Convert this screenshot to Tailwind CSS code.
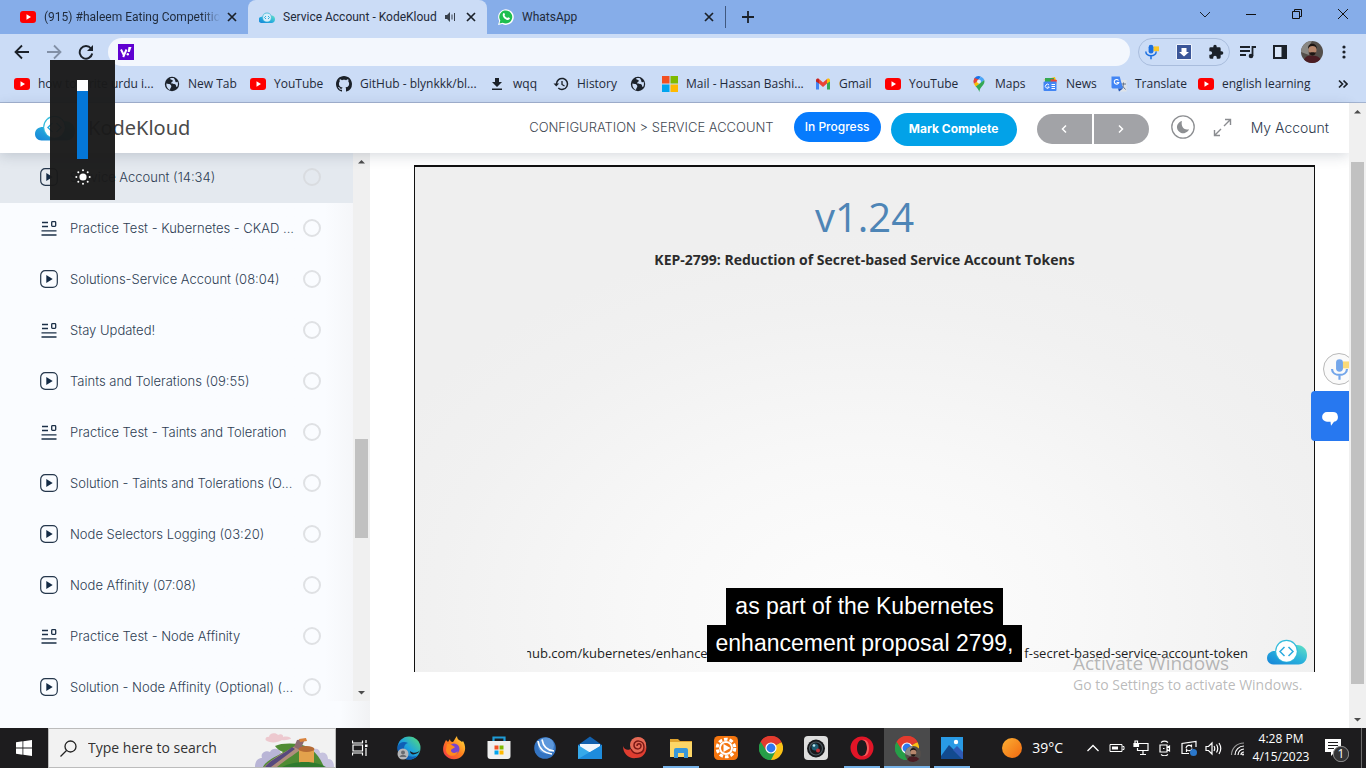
<!DOCTYPE html>
<html lang="en">
<head>
<meta charset="utf-8">
<title>Service Account - KodeKloud</title>
<script src="https://cdn.jsdelivr.net/npm/@tailwindcss/browser@4"></script>
</head>
<body class="flex h-screen flex-col overflow-hidden bg-white font-['Open_Sans','Noto_Sans',sans-serif] text-xs text-[#1f2a3a]">

<svg width="0" height="0" class="absolute" aria-hidden="true">
  <defs>
    <linearGradient id="cloudFill" x1="0" y1="1" x2="1" y2="0"><stop offset="0" stop-color="#1583d8"/><stop offset=".5" stop-color="#29b0dc"/><stop offset="1" stop-color="#62e3c4"/></linearGradient>
    <linearGradient id="sunFill" x1="0" y1="0" x2="1" y2="1"><stop offset="0" stop-color="#fbb034"/><stop offset="1" stop-color="#f2680f"/></linearGradient>
    <linearGradient id="edgeFill" x1="0" y1="1" x2="1" y2="0"><stop offset="0" stop-color="#0d5cb6"/><stop offset=".5" stop-color="#1fa4dd"/><stop offset="1" stop-color="#5ae06f"/></linearGradient>
    <linearGradient id="foxFill" x1="0" y1="1" x2="1" y2="0"><stop offset="0" stop-color="#f0304f"/><stop offset=".5" stop-color="#ff7b1c"/><stop offset="1" stop-color="#ffe83f"/></linearGradient>
    <symbol id="yt" viewBox="0 0 16 16"><rect y="2" width="16" height="12" rx="3" fill="#f00"/><path d="M6.500 5.300v5.400L11 8z" fill="#fff"/></symbol>
    <symbol id="cloud" viewBox="0 0 40 26"><path d="M6.500 25.500C2.500 25.500 0 22.500 0 19c0-4.500 3.500-7 8-7L29 6c6.500-.5 11 4 11 10 0 5.500-3.500 9.500-8.500 9.500z" fill="url(#cloudFill)"/><circle cx="19.500" cy="12" r="11.300" fill="#34bcdc"/><circle cx="19.500" cy="12.400" r="10.300" fill="#fff"/><path d="M17.500 8L13 12.500l4.500 4.500M21.500 8l4.500 4.500-4.500 4.500" fill="none" stroke="#2cabdf" stroke-width="1.500"/></symbol>
    <symbol id="cloudTab" viewBox="0 0 16 11"><path d="M3 11a3 3 0 0 1-.5-6.200L13 3.500c4 .5 4 7 0 7.500z" fill="url(#cloudFill)"/><circle cx="8" cy="5.300" r="4.800" fill="#5cc0dd"/><circle cx="8" cy="5.500" r="3.900" fill="#d8eefa"/><path d="M7 4L5.500 5.500 7 7M9 4l1.500 1.500L9 7" fill="none" stroke="#2cabdf"/></symbol>
    <symbol id="x" viewBox="0 0 16 16"><path d="M4 4l8 8M12 4l-8 8" stroke="#1b2129" stroke-width="1.700"/></symbol>
    <symbol id="globe" viewBox="0 0 16 16"><circle cx="8" cy="8" r="7.200" fill="#1c222b"/><path d="M2.300 7.500c2 .5 4.500.3 5 2.500.3 1.500-1.300 1.800-1.300 4-2-.8-3.900-3-3.700-6.500zM6 2.400c.5 1.700 2.500.9 2.800 2.300.2 1.200-1.700 1-1.500 2.300.3 1.500 3 .2 4.400 1.800.6.8.3 2.400 1.300 2.200 1-1 1.300-3.500.6-5.200-1.300 1-2.300.3-2.300-.8 0-1.200-1-1.600-1.300-2.700C8.600 1.900 7.300 1.900 6 2.400z" fill="#cbdcf6"/></symbol>
    <symbol id="play" viewBox="0 0 18 18"><rect x=".7" y=".7" width="16.600" height="16.600" rx="4.500" fill="none" stroke="#24364b" stroke-width="1.200"/><path d="M6.300 5v8l6.400-4z" fill="#132a44"/></symbol>
    <symbol id="test" viewBox="0 0 18 18"><path d="M2 3.500h6M2 7.500h6M1.500 11.800h15M1.500 16h15" stroke="#1b2f47" stroke-width="1.300" fill="none"/><rect x="11.700" y="2.700" width="4" height="4.600" rx=".8" fill="none" stroke="#1b2f47" stroke-width="1.300"/></symbol>
    <symbol id="chrome" viewBox="0 0 24 24"><path d="M12 12L1.600 6A12 12 0 0 1 22.400 6z" fill="#e33b2e"/><path d="M12 12L22.400 6A12 12 0 0 1 12 24z" fill="#fbc116"/><path d="M12 12v12A12 12 0 0 1 1.600 6z" fill="#269e48"/><path d="M12 6.500h10.700A12 12 0 0 0 1.600 6l5.600 9z" fill="#e33b2e"/><path d="M16.800 14.800L12 24A12 12 0 0 1 1.600 6l5.600 8.800z" fill="#269e48"/><circle cx="12" cy="12" r="5.600" fill="#fff"/><circle cx="12" cy="12" r="4.400" fill="#2f78ee"/></symbol>
    <symbol id="face" viewBox="0 0 22 22"><circle cx="11" cy="11" r="11" fill="#544f4b"/><path d="M0 11A11 11 0 0 1 11 0c-3 4-4 10-3 14z" fill="#8a8884"/><path d="M3 18.500c2-4 5-4 8-4s7 1 8.500 3.500A11 11 0 0 1 3 18.500z" fill="#4b1d24"/><ellipse cx="11.500" cy="9" rx="4" ry="5.500" fill="#b6866c"/><path d="M7 8c-.5-7 9-7 9 0-1-2-2-3-4.500-3S8 6 7 8zM8 11c1 1 2 .3 3.500.3s2.500.7 3.500-.3c-.5 5-6.500 5-7 0z" fill="#1c1614"/></symbol>
    <symbol id="mic" viewBox="0 0 20 20"><rect x="13" y="3" width="7" height="6" fill="#fbc625"/><rect x="7" y="1" width="6" height="11" rx="3" fill="#1b6fe0"/><path d="M3.500 9.500c0 7 13 7 13 0M10 15v4" fill="none" stroke="#1b6fe0" stroke-width="1.900"/></symbol>
  </defs>
</svg>

<!-- Tab strip -->
<header class="shrink-0 bg-[#cbdcf6]">
  <div class="flex h-[34px] bg-[#86ade9]">
    <div class="flex min-w-0 grow pl-[9px] font-['Roboto','Open_Sans',sans-serif]" role="tablist">
      <div role="tab" class="flex w-[239px] items-center px-[11px]">
        <svg class="size-4 shrink-0"><use href="#yt"/></svg>
        <span class="ml-2 grow overflow-hidden whitespace-nowrap [mask-image:linear-gradient(to_right,black_90%,transparent)]">(915) #haleem Eating Competitio</span>
        <button aria-label="Close tab" class="-mr-[3px] ml-1 size-4 shrink-0"><svg class="size-4"><use href="#x"/></svg></button>
      </div>
      <div role="tab" aria-selected="true" class="flex w-[239px] items-center rounded-t-lg bg-[#cbdcf6] px-[11px]">
        <svg class="h-[11px] w-4 shrink-0"><use href="#cloudTab"/></svg>
        <span class="ml-2 grow whitespace-nowrap">Service Account - KodeKloud</span>
        <svg class="mr-[7px] size-3 shrink-0" viewBox="0 0 12 12"><path d="M1 4h2l3-3v10L3 8H1z" fill="#39414c"/><path d="M8 3.500v5M10.500 2v8" stroke="#39414c"/></svg>
        <button aria-label="Close tab" class="-mr-[3px] size-4 shrink-0"><svg class="size-4"><use href="#x"/></svg></button>
      </div>
      <div role="tab" class="flex w-[239px] items-center border-r border-[#4c6690] [border-image:linear-gradient(transparent_20%,#40587f_20%,#40587f_80%,transparent_80%)_1] px-[11px]">
        <svg class="size-4 shrink-0" viewBox="0 0 16 16"><path d="M0 16l1.200-4A7.800 7.800 0 1 1 4.300 15z" fill="#fff"/><path d="M1.500 14.500l.8-3A6.500 6.500 0 1 1 4.700 13.700z" fill="#1fbf4f"/><path d="M5.300 4.300c.7-.6 1.300-.1 1.500.6.3.8.2.9-.3 1.600.7 1.300 1.500 2 2.800 2.500.7-1 .9-1 2-.3.8.4.7 1 .1 1.600-2.300 2.600-8.600-3-6.100-6z" fill="#fff"/></svg>
        <span class="ml-2 grow">WhatsApp</span>
        <button aria-label="Close tab" class="-mr-[3px] size-4 shrink-0"><svg class="size-4"><use href="#x"/></svg></button>
      </div>
      <button aria-label="New tab" class="ml-3 flex w-5 items-center justify-center"><svg class="size-4" viewBox="0 0 16 16"><path d="M8 2v12M2 8h12" stroke="#1b2129" stroke-width="1.800"/></svg></button>
    </div>
    <div class="flex h-7 shrink-0">
      <button aria-label="Search tabs" class="flex w-[46px] items-center justify-center"><svg class="size-3" viewBox="0 0 12 12"><path d="M1 4l5 5 5-5" fill="none" stroke="#1b2129"/></svg></button>
      <button aria-label="Minimize" class="flex w-[46px] items-center justify-center"><svg class="size-3" viewBox="0 0 12 12"><path d="M1 6.500h10" stroke="#111"/></svg></button>
      <button aria-label="Restore" class="flex w-[46px] items-center justify-center"><svg class="size-3" viewBox="0 0 12 12"><path d="M1.500 3.500h7v7h-7zM3.500 3.500v-2h7v7h-2" fill="none" stroke="#111"/></svg></button>
      <button aria-label="Close" class="flex w-[46px] items-center justify-center"><svg class="size-3" viewBox="0 0 12 12"><path d="M1 1l10 10M11 1L1 11" stroke="#111"/></svg></button>
    </div>
  </div>

  <!-- Toolbar -->
  <div class="flex h-9 items-center pr-[6px] pl-[6px]">
    <button aria-label="Back" class="flex w-8 justify-center"><svg class="size-4" viewBox="0 0 16 16"><path d="M15 8H2M8 1.500L1.500 8 8 14.500" fill="none" stroke="#1b2129" stroke-width="1.800"/></svg></button>
    <button aria-label="Forward" class="flex w-8 justify-center"><svg class="size-4" viewBox="0 0 16 16"><path d="M1 8h13M8 1.500L14.500 8 8 14.500" fill="none" stroke="#8290a6" stroke-width="1.800"/></svg></button>
    <button aria-label="Reload" class="flex w-8 justify-center"><svg class="size-4" viewBox="0 0 16 16"><path d="M13 4.500A6.300 6.300 0 1 0 14.200 9.500" fill="none" stroke="#1b2129" stroke-width="1.900"/><path d="M15 1v6H9z" fill="#1b2129"/></svg></button>
    <div class="ml-[6px] flex h-7 grow items-center rounded-full bg-[#f3f7fd] px-[10px]">
      <svg class="size-4 shrink-0" viewBox="0 0 16 16"><path d="M0 0h16v16H0z" fill="#5f01d1"/><path d="M3 5.500l2.500 5M8.500 5.500L5.200 13" stroke="#fff" stroke-width="2"/><path d="M10.500 3h3l-1.800 5h-2z" fill="#fff"/><circle cx="9.800" cy="10.200" r="1.200" fill="#fff"/></svg>
      <input type="text" aria-label="Address and search bar" class="h-full min-w-0 grow bg-transparent px-2 outline-none">
    </div>
    <div class="ml-2 flex h-7 w-[92px] shrink-0 items-center justify-between rounded-full border border-[#a9bddd] pr-[5px] pl-1">
      <button aria-label="Voice input" class="size-4"><svg class="size-4"><use href="#mic"/></svg></button>
      <button aria-label="Download" class="size-4"><svg class="size-4" viewBox="0 0 16 16"><path d="M.5.500h15v15H.5z" fill="#3b5698" stroke="#eef4fd"/><path d="M5.500 4h5v4H13l-5 4.500L3 8h2.500z" fill="#fff"/></svg></button>
      <button aria-label="Extensions" class="size-4"><svg class="size-4" viewBox="0 0 24 24"><path d="M20.500 11H19V7a2 2 0 0 0-2-2h-4V3.500a2.500 2.500 0 0 0-5 0V5H4a2 2 0 0 0-2 2v3.800h1.500a2.700 2.700 0 0 1 0 5.400H2V20a2 2 0 0 0 2 2h3.800v-1.500a2.700 2.700 0 0 1 5.400 0V22H17a2 2 0 0 0 2-2v-4h1.500a2.500 2.500 0 0 0 0-5z" fill="#1b2129"/></svg></button>
    </div>
    <div class="ml-[2px] flex shrink-0">
      <button aria-label="Media" class="flex w-8 items-center justify-center"><svg class="size-4" viewBox="0 0 16 16"><path d="M0 3h10M0 7h10M0 11h6M12.500 12V3h3.500" fill="none" stroke="#1b2129" stroke-width="1.800"/><circle cx="11" cy="12" r="2.300" fill="#1b2129"/></svg></button>
      <button aria-label="Side panel" class="flex w-8 items-center justify-center"><svg class="size-4" viewBox="0 0 16 16"><path d="M1 1h14v14H1z" fill="#1b2129"/><path d="M3 3h6.500v10H3z" fill="#d9e6f9"/></svg></button>
      <button aria-label="Profile" class="flex w-8 items-center justify-center"><svg class="size-[22px]"><use href="#face"/></svg></button>
      <button aria-label="Menu" class="flex w-8 items-center justify-center"><svg class="size-4" viewBox="0 0 16 16" fill="#1b2129"><circle cx="8" cy="3" r="1.600"/><circle cx="8" cy="8" r="1.600"/><circle cx="8" cy="13" r="1.600"/></svg></button>
    </div>
  </div>

  <!-- Bookmarks -->
  <nav class="flex h-[33px] items-center border-b border-[#a3b3d0] pb-[5px] pl-[14px] whitespace-nowrap">
    <a href="#" class="flex w-[150px] shrink-0 items-center gap-2"><svg class="size-4 shrink-0"><use href="#yt"/></svg>how to write urdu i...</a>
    <a href="#" class="flex w-[86px] shrink-0 items-center gap-2"><svg class="size-4 shrink-0"><use href="#globe"/></svg>New Tab</a>
    <a href="#" class="flex w-[86px] shrink-0 items-center gap-2"><svg class="size-4 shrink-0"><use href="#yt"/></svg>YouTube</a>
    <a href="#" class="flex w-[153px] shrink-0 items-center gap-2"><svg class="size-4 shrink-0" viewBox="0 0 16 16"><path d="M8 0C3.580 0 0 3.580 0 8c0 3.540 2.290 6.530 5.470 7.590.4.070.55-.17.55-.38 0-.19-.01-.82-.01-1.490-2.010.37-2.530-.49-2.690-.94-.09-.23-.48-.94-.82-1.130-.28-.15-.68-.52-.01-.53.63-.01 1.080.58 1.230.82.72 1.210 1.870.87 2.330.66.070-.52.28-.87.51-1.070-1.780-.2-3.640-.89-3.640-3.950 0-.87.31-1.590.82-2.150-.08-.2-.36-1.020.08-2.120 0 0 .67-.21 2.200.82.64-.18 1.320-.27 2-.27s1.360.09 2 .27c1.530-1.040 2.200-.82 2.200-.82.44 1.100.16 1.920.08 2.120.51.56.82 1.270.82 2.150 0 3.070-1.870 3.750-3.650 3.950.29.25.54.73.54 1.480 0 1.070-.01 1.930-.01 2.200 0 .21.15.46.55.38A8 8 0 0 0 16 8c0-4.420-3.580-8-8-8z" fill="#1b2129"/></svg>GitHub - blynkkk/bl...</a>
    <a href="#" class="flex w-16 shrink-0 items-center gap-2"><svg class="size-4 shrink-0" viewBox="0 0 16 16"><path d="M6 2h4v4h3l-5 5-5-5h3zM3 12.500h10V14H3z" fill="#1b2129"/></svg>wqq</a>
    <a href="#" class="flex w-[77px] shrink-0 items-center gap-2"><svg class="size-4 shrink-0" viewBox="0 0 16 16"><path d="M3.500 8A5.500 5.500 0 1 1 5.300 12" fill="none" stroke="#1b2129" stroke-width="1.500"/><path d="M.5 7.500h5.600L3.300 10.500z" fill="#1b2129"/><path d="M9 5v3.500l2.500 1.500" fill="none" stroke="#1b2129" stroke-width="1.300"/></svg>History</a>
    <a href="#" aria-label="Bookmark" class="flex w-8 shrink-0 items-center"><svg class="size-4 shrink-0"><use href="#globe"/></svg></a>
    <a href="#" class="flex w-[153px] shrink-0 items-center gap-2"><svg class="size-4 shrink-0" viewBox="0 0 16 16"><path d="M0 0h7.500v7.500H0z" fill="#f25022"/><path d="M8.500 0H16v7.500H8.500z" fill="#7fba00"/><path d="M0 8.500h7.500V16H0z" fill="#00a4ef"/><path d="M8.500 8.500H16V16H8.500z" fill="#ffb900"/></svg>Mail - Hassan Bashi...</a>
    <a href="#" class="flex w-[70px] shrink-0 items-center gap-2"><svg class="size-4 shrink-0" viewBox="0 0 16 16"><path d="M1 4v9.500h3V6z" fill="#4285f4"/><path d="M15 4v9.500h-3V6z" fill="#34a853"/><path d="M4 3l4 3.500L12 3v4.500L8 11 4 7.500z" fill="#ea4335"/><path d="M1 4.500C1 2.500 3 2 4 3v4.500L1 5.500z" fill="#c5221f"/><path d="M15 4.500c0-2-2-2.500-3-1.500v4.500l3-2z" fill="#fbbc04"/></svg>Gmail</a>
    <a href="#" class="flex w-[86px] shrink-0 items-center gap-2"><svg class="size-4 shrink-0"><use href="#yt"/></svg>YouTube</a>
    <a href="#" class="flex w-[71px] shrink-0 items-center gap-2"><svg class="size-4 shrink-0" viewBox="0 0 16 16"><path d="M3.500 2A5.500 5.500 0 0 1 10 .7L4 7.500z" fill="#1a73e8"/><path d="M10 .7A5.600 5.600 0 0 1 13.300 4L9 8 7 4z" fill="#4aa6f7"/><path d="M3.500 2A6 6 0 0 0 3 8l5-4.500z" fill="#ea4335"/><path d="M3 8l4-3.500 1.500 3L5 11z" fill="#fbbc04"/><path d="M13.300 4c1.200 5-4.300 6-5 12C7.500 13 6 12 4.800 10.500z" fill="#34a853"/><circle cx="8" cy="5.500" r="1.900" fill="#e7f0fb"/></svg>Maps</a>
    <a href="#" class="flex w-[69px] shrink-0 items-center gap-2"><svg class="size-4 shrink-0" viewBox="0 0 16 16"><path d="M1 4l12-3 1 4z" fill="#fbbc04"/><path d="M3 2h9v5H3z" fill="#34a853"/><path d="M9 3l6 1-1 4H8z" fill="#ea4335"/><rect x="1.500" y="5.500" width="13" height="9.500" rx="1" fill="#4285f4"/><path d="M7 9a2 2 0 1 0 .3 2H5.500M9.500 8.500h3.500M9.500 10.500h3.500M9.500 12.500h3.500" stroke="#fff" fill="none"/></svg>News</a>
    <a href="#" class="flex w-[87px] shrink-0 items-center gap-2"><svg class="size-4 shrink-0" viewBox="0 0 16 16"><path d="M6 4h9.500v11.500H9z" fill="#dfe3e8"/><path d="M10 8h5M12.500 6.500V8c0 2-1 4-3 5M11 9.500l3.500 4" stroke="#65748a" fill="none"/><path d="M.5.500h8.200l3.300 12H1.500l-1-1z" fill="#4285f4"/><path d="M8 15.500l4-3H7z" fill="#2456b5"/><path d="M7.500 4.500a2.300 2.300 0 1 0 .3 2H5.600" stroke="#fff" stroke-width="1.100" fill="none"/></svg>Translate</a>
    <a href="#" class="flex shrink-0 items-center gap-2"><svg class="size-4 shrink-0"><use href="#yt"/></svg>english learning</a>
    <button aria-label="More bookmarks" class="mr-[18px] ml-auto"><svg class="size-[10px]" viewBox="0 0 10 10"><path d="M1 1.500L4.500 5 1 8.500M5.500 1.500L9 5 5.500 8.500" fill="none" stroke="#1b2129" stroke-width="1.700"/></svg></button>
  </nav>
</header>

<!-- Web page -->
<div class="relative flex min-h-0 grow font-['Inter','Open_Sans',sans-serif]">
  <div class="flex min-w-0 grow flex-col">
    <div class="z-10 flex h-[50px] shrink-0 items-center bg-white pr-5 pl-[35px] shadow-[0_3px_12px_rgba(40,55,80,0.18)]">
      <a href="#" class="flex items-center gap-[13px] font-['Noto_Sans','Open_Sans',sans-serif] text-xl text-[#4a4a4a]"><svg class="h-[26px] w-10"><use href="#cloud"/></svg>KodeKloud</a>
      <span class="mr-5 ml-auto text-[13px] font-light text-[#3f4953]">CONFIGURATION &gt; SERVICE ACCOUNT</span>
      <button class="mr-[10px] mb-[2px] h-[30px] w-[87px] rounded-full bg-[#067bfd] text-xs font-medium text-white">In Progress</button>
      <button class="mt-[2px] mr-5 h-[33px] w-[126px] rounded-full bg-[#02a2e8] text-xs font-bold text-white">Mark Complete</button>
      <div class="mt-[2px] mr-[22px] flex gap-[2px]">
        <button aria-label="Previous lesson" class="flex h-[30px] w-[55px] items-center justify-center rounded-l-full bg-[#a2a3a7]"><svg class="size-[10px]" viewBox="0 0 10 10"><path d="M7 1.500L3.500 5 7 8.500" fill="none" stroke="#fff" stroke-width="1.500"/></svg></button>
        <button aria-label="Next lesson" class="flex h-[30px] w-[55px] items-center justify-center rounded-r-full bg-[#a2a3a7]"><svg class="size-[10px]" viewBox="0 0 10 10"><path d="M3 1.500L6.500 5 3 8.500" fill="none" stroke="#fff" stroke-width="1.500"/></svg></button>
      </div>
      <button aria-label="Dark mode" class="mr-[18px] mb-[2px]"><svg class="size-6" viewBox="0 0 24 24"><circle cx="12" cy="12" r="11.200" fill="none" stroke="#8d8f92" stroke-width="1.300"/><path d="M11 6a6.200 6.200 0 1 0 7 8.200C13 16 9.500 11 11 6z" fill="#8d8f92"/></svg></button>
      <button aria-label="Full screen" class="mr-[19px] mb-[2px]"><svg class="size-[19px]" viewBox="0 0 19 19"><path d="M12 1.500h5.500V7M17 2l-6 6M7 17.500H1.500V12M2 17l6-6" fill="none" stroke="#8a8c90" stroke-width="1.400"/></svg></button>
      <a href="#" class="text-sm font-light text-[#2c394d]">My Account</a>
    </div>

    <div class="flex min-h-0 grow">
      <aside class="flex w-[370px] shrink-0 flex-col bg-[#fafcff]">
        <div class="flex min-h-0 grow">
          <ul class="min-w-0 grow bg-linear-to-r from-[#fafcff] from-92% to-[#f5f6f9] text-[13px] font-light text-[#2d3d53]">
            <li class="flex h-[50px] items-center bg-[#e4e9ef] pr-8 pb-px pl-10"><svg class="mr-3 mb-px size-[18px] shrink-0"><use href="#play"/></svg><a href="#" class="min-w-0 flex-1 truncate">Service Account (14:34)</a><input type="checkbox" aria-label="Service Account done" class="mb-[2px] ml-1 size-[18px] appearance-none rounded-full border-2 border-[#d9dce0]"></li>
            <li class="flex h-[51px] items-center pr-8 pl-10"><svg class="mr-3 mb-[2px] size-[18px] shrink-0"><use href="#test"/></svg><a href="#" class="min-w-0 flex-1 truncate">Practice Test - Kubernetes - CKAD ...</a><input type="checkbox" aria-label="Practice Test CKAD done" class="mb-[2px] ml-1 size-[18px] appearance-none rounded-full border-2 border-[#dfe1e4]"></li>
            <li class="flex h-[51px] items-center pr-8 pl-10"><svg class="mr-3 mb-[2px] size-[18px] shrink-0"><use href="#play"/></svg><a href="#" class="min-w-0 flex-1 truncate">Solutions-Service Account (08:04)</a><input type="checkbox" aria-label="Solutions-Service Account done" class="mb-[2px] ml-1 size-[18px] appearance-none rounded-full border-2 border-[#dfe1e4]"></li>
            <li class="flex h-[51px] items-center pr-8 pl-10"><svg class="mr-3 mb-[2px] size-[18px] shrink-0"><use href="#test"/></svg><a href="#" class="min-w-0 flex-1 truncate">Stay Updated!</a><input type="checkbox" aria-label="Stay Updated done" class="mb-[2px] ml-1 size-[18px] appearance-none rounded-full border-2 border-[#dfe1e4]"></li>
            <li class="flex h-[51px] items-center pr-8 pl-10"><svg class="mr-3 mb-[2px] size-[18px] shrink-0"><use href="#play"/></svg><a href="#" class="min-w-0 flex-1 truncate">Taints and Tolerations (09:55)</a><input type="checkbox" aria-label="Taints and Tolerations done" class="mb-[2px] ml-1 size-[18px] appearance-none rounded-full border-2 border-[#dfe1e4]"></li>
            <li class="flex h-[51px] items-center pr-8 pl-10"><svg class="mr-3 mb-[2px] size-[18px] shrink-0"><use href="#test"/></svg><a href="#" class="min-w-0 flex-1 truncate">Practice Test - Taints and Toleration</a><input type="checkbox" aria-label="Practice Test Taints done" class="mb-[2px] ml-1 size-[18px] appearance-none rounded-full border-2 border-[#dfe1e4]"></li>
            <li class="flex h-[51px] items-center pr-8 pl-10"><svg class="mr-3 mb-[2px] size-[18px] shrink-0"><use href="#play"/></svg><a href="#" class="min-w-0 flex-1 truncate">Solution - Taints and Tolerations (O...</a><input type="checkbox" aria-label="Solution Taints done" class="mb-[2px] ml-1 size-[18px] appearance-none rounded-full border-2 border-[#dfe1e4]"></li>
            <li class="flex h-[51px] items-center pr-8 pl-10"><svg class="mr-3 mb-[2px] size-[18px] shrink-0"><use href="#play"/></svg><a href="#" class="min-w-0 flex-1 truncate">Node Selectors Logging (03:20)</a><input type="checkbox" aria-label="Node Selectors done" class="mb-[2px] ml-1 size-[18px] appearance-none rounded-full border-2 border-[#dfe1e4]"></li>
            <li class="flex h-[51px] items-center pr-8 pl-10"><svg class="mr-3 mb-[2px] size-[18px] shrink-0"><use href="#play"/></svg><a href="#" class="min-w-0 flex-1 truncate">Node Affinity (07:08)</a><input type="checkbox" aria-label="Node Affinity done" class="mb-[2px] ml-1 size-[18px] appearance-none rounded-full border-2 border-[#dfe1e4]"></li>
            <li class="flex h-[51px] items-center pr-8 pl-10"><svg class="mr-3 mb-[2px] size-[18px] shrink-0"><use href="#test"/></svg><a href="#" class="min-w-0 flex-1 truncate">Practice Test - Node Affinity</a><input type="checkbox" aria-label="Practice Test Node Affinity done" class="mb-[2px] ml-1 size-[18px] appearance-none rounded-full border-2 border-[#dfe1e4]"></li>
            <li class="flex h-[51px] items-center pr-8 pl-10"><svg class="mr-3 mb-[2px] size-[18px] shrink-0"><use href="#play"/></svg><a href="#" class="min-w-0 flex-1 truncate">Solution - Node Affinity (Optional) (...</a><input type="checkbox" aria-label="Solution Node Affinity done" class="mb-[2px] ml-1 size-[18px] appearance-none rounded-full border-2 border-[#dfe1e4]"></li>
          </ul>
          <div class="flex w-[17px] shrink-0 flex-col items-center bg-[#f0f0f0]">
            <svg class="mt-[5px] size-[7px] shrink-0" viewBox="0 0 7 7"><path d="M0 5.500L3.500 2 7 5.500z" fill="#4d4d4d"/></svg>
            <div class="flex w-[13px] grow flex-col py-[5px]"><div class="grow-[271]"></div><div class="grow-[99] bg-[#c1c1c1]"></div><div class="grow-[147]"></div></div>
            <svg class="mb-[5px] size-[7px] shrink-0" viewBox="0 0 7 7"><path d="M0 2l3.500 3.500L7 2z" fill="#4d4d4d"/></svg>
          </div>
        </div>
        <div class="h-[27px] shrink-0 bg-linear-to-r from-[#fafcff] from-92% to-[#f1f2f4]"></div>
      </aside>

      <!-- Lesson video -->
      <main class="min-w-0 grow pt-3 pr-[34px] pb-14 pl-11">
        <div class="relative flex h-full flex-col items-center border-x border-t-2 border-[#111] bg-[radial-gradient(ellipse_60%_75%_at_50%_88%,#fdfdfd_0%,#f8f8f8_40%,#f1f1f1_80%,#efefef_100%)] font-['Open_Sans','Noto_Sans',sans-serif] text-[#222]">
          <h1 class="mt-[23px] text-[40px] leading-[54px] text-[#4e85b6]">v1.24</h1>
          <h2 class="mt-[6px] text-sm leading-5 font-bold text-[#2c2c2c]">KEP-2799: Reduction of Secret-based Service Account Tokens</h2>
          <div class="mt-auto mb-[7px] flex w-full items-center pr-[7px] pl-[112px] text-[13px] text-[#1d1d1d]">
            <div class="mt-1 overflow-hidden"><span class="-ml-[3px] block">hub.com/kubernetes/enhance</span></div>
            <span class="mt-1 mr-[19px] ml-auto">f-secret-based-service-account-token</span>
            <svg class="h-[26px] w-10"><use href="#cloud"/></svg>
          </div>
          <div class="absolute inset-x-0 bottom-[10px] flex flex-col items-center font-['Liberation_Sans',sans-serif] text-[23px] leading-[37px] text-white">
            <span class="bg-black px-[9px]">as part of the Kubernetes</span>
            <span class="bg-black px-[9px]">enhancement proposal 2799,</span>
          </div>
        </div>
      </main>
    </div>
  </div>

  <!-- Page scrollbar -->
  <div class="z-20 flex w-[17px] shrink-0 flex-col items-center bg-[#f0f0f0]">
    <svg class="mt-[5px] size-[7px] shrink-0" viewBox="0 0 7 7"><path d="M0 5.500L3.500 2 7 5.500z" fill="#4d4d4d"/></svg>
    <div class="flex w-[13px] grow flex-col py-[5px]"><div class="grow-[42]"></div><div class="grow-[522] bg-[#c1c1c1]"></div><div class="grow-[27]"></div></div>
    <svg class="mb-[5px] size-[7px] shrink-0" viewBox="0 0 7 7"><path d="M0 2l3.500 3.500L7 2z" fill="#4d4d4d"/></svg>
  </div>

  <!-- Floating widgets -->
  <div class="absolute top-[250px] right-[17px] z-10 flex w-[38px] flex-col items-end overflow-hidden">
    <button aria-label="Dictate" class="-mr-[6px] flex size-8 items-center justify-center rounded-full border border-[#b9b9b9] bg-[#fafafa]"><svg class="size-[23px] opacity-60"><use href="#mic"/></svg></button>
    <button aria-label="Chat" class="mt-[6px] flex h-[50px] w-[38px] items-center justify-center rounded-l bg-[#2778f0]"><svg class="mt-[6px] h-[14px] w-4" viewBox="0 0 16 14"><path d="M5 0h6a4.900 4.900 0 0 1 1 9.700L9 13.800l-.5-4H5A4.900 4.900 0 0 1 5 0z" fill="#fff"/></svg></button>
  </div>
</div>

<!-- Taskbar -->
<footer class="flex h-10 shrink-0 bg-[#1d1c1e] text-white">
  <button aria-label="Start" class="flex w-12 items-center justify-center"><svg class="size-4" viewBox="0 0 16 16" fill="#fff"><path d="M0 2.200l6.500-.9v6.300H0zM7.300 1.200L16 0v7.600H7.300zM0 8.400h6.500v6.300L0 13.800zM7.300 8.400H16V16l-8.700-1.200z"/></svg></button>
  <label class="flex w-72 shrink-0 border border-[#bcbcbc] bg-[#f2f2f2]">
    <svg class="mt-[11px] ml-[11px] size-[17px] shrink-0" viewBox="0 0 17 17"><circle cx="10.500" cy="6.500" r="5.500" fill="none" stroke="#222" stroke-width="1.300"/><path d="M6.500 10.500L.5 16.500" stroke="#222" stroke-width="1.300"/></svg>
    <input type="text" aria-label="Search Windows" placeholder="Type here to search" class="min-w-0 grow bg-transparent pl-[11px] text-sm text-[#222] outline-none placeholder:text-[#333]">
    <svg class="h-[38px] w-[80px] shrink-0" viewBox="0 0 80 38"><path d="M12 12c-3-1-1-5 2-4 0-4 7-5 9-2 3-2 6 0 5 2 4-1 8 0 8 2-3 0-5 2-9 1-4 3-12 3-15 1z" fill="#edc9cf"/><path d="M0 38c0-7 4-9 7-9-2-5 4-8 8-6 2-5 10-4 11 1l6 14z" fill="#b9b5d6"/><path d="M56 22c4-4 9-2 9 2 5-2 8 2 8 6 4 0 6 3 6 8H58z" fill="#c6c2de"/><path d="M20 17c5-3 16-3 24-2 12 3 19 9 25 23H8c4-8 16-11 20-15-3-1-6-3-8-6z" fill="#4f8b34"/><path d="M45 13C38 20 20 26 9 38h13c8-7 19-13 24-18z" fill="#b08e7c"/><path d="M40 20L16 38h-6c6-8 18-12 27-20z" fill="#57497d"/><path d="M42 11l8-1-3 7 6 3-6 2-8-4z" fill="#8c6a70"/><path d="M44 10l7-1 1 3-7 1z" fill="#d8823c"/><path d="M44 20v14c4 3 11 3 15 0V20z" fill="#e3a24c"/><ellipse cx="51.500" cy="20" rx="8" ry="3" fill="#b56b35"/><path d="M27 38c12-6 32-7 44 0z" fill="#2f7a2e"/></svg>
  </label>
  <button aria-label="Task view" class="flex w-12 items-center justify-center"><svg class="size-4" viewBox="0 0 16 16" fill="none" stroke="#fff" stroke-width="1.200"><path d="M.5.500V3h10V.5M.5 15.500V13h10v2.500M1 5h9.500v6H1zM14 0v3M14 8v8"/><path d="M13 4.500h2.500v2.500H13z" fill="#fff" stroke="none"/></svg></button>
  <div class="flex w-[591px] shrink-0 pl-[2px]">
    <button aria-label="Edge" class="flex flex-1 items-center justify-center"><svg class="size-6" viewBox="0 0 24 24"><circle cx="12" cy="12" r="11.500" fill="url(#edgeFill)"/><path d="M.6 11C2 6 7 5 11 7c-5 1-5 8-2 11 4 4 9 3 12 1-4 5-11 6-16 2C2 19 0 15 .6 11z" fill="#0f5fb4"/><path d="M13 15c3 3 8 2 10-1-1 3-4 4-7 4.500-2-.5-3-1.500-3-3.500z" fill="#1d1c1e"/><circle cx="6" cy="18" r="5.500" fill="#b4b5b7"/><circle cx="6" cy="16.500" r="2" fill="#686b70"/><path d="M2.500 21c1-3 6-3 7 0z" fill="#686b70"/></svg></button>
    <button aria-label="Firefox" class="flex flex-1 items-center justify-center"><svg class="size-6" viewBox="0 0 24 24"><path d="M3 6l1-2 2 2 2-3c0 2 1 3 3 3 1-1 2-4 4-6 0 4 3 4 5 6l1-1c3 5 3 11-1 15-5 5-13 4-17-1-3-4-2-9 0-13z" fill="url(#foxFill)"/><circle cx="12" cy="13" r="5.500" fill="#7845cf"/><path d="M5 8c4-1 5 2 8 3-1 2-4 1-4 4 1 3 6 2 7 0-1 7-12 6-12-1z" fill="#ff8a1d"/></svg></button>
    <button aria-label="Microsoft Store" class="flex flex-1 items-center justify-center"><svg class="size-6" viewBox="0 0 24 24"><path d="M6.500 6V1.500h11V6" fill="none" stroke="#1f9bd6" stroke-width="2.200"/><path d="M.5 5h23v15q0 3-3 3h-17q-3 0-3-3z" fill="#efefef"/><path d="M7.500 9.500h4v4h-4z" fill="#f25022"/><path d="M12.500 9.500h4v4h-4z" fill="#7fba00"/><path d="M7.500 14.500h4v4h-4z" fill="#00a4ef"/><path d="M12.500 14.500h4v4h-4z" fill="#ffb900"/></svg></button>
    <button aria-label="Downloader" class="flex flex-1 items-center justify-center"><svg class="size-6" viewBox="0 0 24 24"><circle cx="12" cy="12" r="10.800" fill="#3474c2"/><circle cx="13" cy="9.500" r="8" fill="#5c97db"/><path d="M5 5c1 7 6 12 14 13M9 3.500c1 6 5 11 12 11.500" fill="none" stroke="#fff" stroke-width="1.600"/></svg></button>
    <button aria-label="Mail" class="flex flex-1 items-center justify-center"><svg class="size-6" viewBox="0 0 24 24"><path d="M0 9l12-8.500L24 9v5H0z" fill="#1260ad"/><path d="M2 8h20v8H2z" fill="#f0f6fc"/><path d="M0 9l12 7.500L24 9v14H0z" fill="#36a9ea"/><path d="M0 23L24 9v14z" fill="#1e8cdc"/></svg></button>
    <button aria-label="Nautilus" class="flex flex-1 items-center justify-center"><svg class="size-6" viewBox="0 0 24 24"><path d="M0 10c1 4 6 5 9 2-3-8 7-14 12-8 5 7 2 18-8 18C6 23 0 18 0 10z" fill="#df3d30"/><circle cx="15" cy="9" r="8" fill="#e56a56"/><path d="M8 13c3 7 13 5 13-2 0-7-10-8-10-2 0 5 7 5 7 1 0-3-4-3-4 0" fill="none" stroke="#7b1714" stroke-width="1.500"/></svg></button>
    <button aria-label="File Explorer" class="flex flex-1 flex-col items-center"><svg class="mt-2 size-6" viewBox="0 0 24 24"><path d="M1 3h8l2 2h12v16H1z" fill="#e0a32e"/><path d="M1 6h22v15H1z" fill="#fcd667"/><path d="M5 22v-8q0-2 2-2h10q2 0 2 2v8h-4v-5H9v5z" fill="#3797d9"/></svg><span class="mt-auto h-[2px] w-9 bg-[#76b2e8]"></span></button>
    <button aria-label="Player" class="flex flex-1 items-center justify-center"><svg class="size-6" viewBox="0 0 24 24"><rect width="24" height="24" rx="4.500" fill="#f4750f"/><circle cx="12" cy="12" r="8.800" fill="none" stroke="#fff" stroke-width="3" stroke-dasharray="3.600 2"/><circle cx="12" cy="12" r="7" fill="#fff"/><circle cx="12" cy="12" r="5" fill="#f4750f"/><path d="M9.500 8v8l7-4z" fill="#fff"/></svg></button>
    <button aria-label="Chrome" class="flex flex-1 items-center justify-center"><svg class="size-6"><use href="#chrome"/></svg></button>
    <button aria-label="Camera" class="flex flex-1 items-center justify-center"><svg class="size-6" viewBox="0 0 24 24"><rect width="24" height="24" rx="4" fill="#dedede"/><circle cx="12" cy="12.500" r="9" fill="#17181b"/><circle cx="12" cy="12.500" r="6.500" fill="none" stroke="#4d5960" stroke-width="1.200"/><circle cx="11" cy="11" r="3.500" fill="#1e5b71"/><circle cx="14" cy="14.500" r="2" fill="#c22f38"/><circle cx="10" cy="9.500" r="1.300" fill="#bfe5ee"/></svg></button>
    <button aria-label="Opera" class="flex flex-1 flex-col items-center"><svg class="mt-2 size-6" viewBox="0 0 24 24"><path fill-rule="evenodd" d="M12 .5a11.500 11.500 0 1 0 0 23 11.500 11.500 0 1 0 0-23zM12 4c3 0 5 3.500 5 8s-2 8-5 8-5-3.500-5-8 2-8 5-8z" fill="#e11527"/><path d="M12 20c5 1.500 7-3 7-8s-2-9.500-7-8c3 0 5 3.500 5 8s-2 8-5 8z" fill="#f55a5a"/></svg><span class="mt-auto h-[2px] w-9 bg-[#76b2e8]"></span></button>
    <button aria-label="Chrome profile" class="flex flex-1 flex-col items-center bg-[#4a4a4b]"><span class="relative mt-2 size-6"><svg class="size-6"><use href="#chrome"/></svg><svg class="absolute -right-[2px] -bottom-[2px] size-4"><use href="#face"/></svg></span><span class="mt-auto h-[2px] w-full bg-[#76b2e8]"></span></button>
    <button aria-label="Photos" class="flex flex-1 flex-col items-center"><svg class="mt-2 size-6" viewBox="0 0 24 24"><path d="M1 1h22v22H1z" fill="#299ae5"/><path d="M1 20L9 9l14 14H1z" fill="#124a8f"/><path d="M13 14l4-4 6 6v7h-1z" fill="#2f5bb6"/><circle cx="16" cy="6" r="2.200" fill="#fff"/></svg><span class="mt-auto h-[2px] w-9 bg-[#76b2e8]"></span></button>
  </div>
  <div class="ml-auto flex shrink-0 items-center">
    <button class="mr-[18px] flex items-center gap-[10px] text-sm"><svg class="size-5" viewBox="0 0 20 20"><circle cx="10" cy="10" r="10" fill="url(#sunFill)"/></svg>39°C</button>
    <button aria-label="Hidden icons" class="flex w-6 justify-center"><svg class="size-3" viewBox="0 0 12 12"><path d="M.5 9L6 3.500 11.500 9" fill="none" stroke="#fff" stroke-width="1.300"/></svg></button>
    <button aria-label="Battery" class="flex w-6 justify-center"><svg class="size-4" viewBox="0 0 16 16"><path d="M1 4.500h12v7H1zM13.500 6.500H15v3h-1.500" fill="none" stroke="#fff"/><path d="M3 6.500h6v3H3z" fill="#fff"/></svg></button>
    <button aria-label="Network" class="flex w-6 justify-center"><svg class="size-4" viewBox="0 0 16 16" fill="none" stroke="#fff" stroke-width="1.200"><path d="M6 3.500h9v7H4.500V8M10 10.500V14M7 14.500h6"/><path d="M1 3.500h4.500v3H1z" fill="#fff"/><path d="M2 3V1h2.500v2"/></svg></button>
    <button aria-label="Camera" class="flex w-6 justify-center"><svg class="size-4" viewBox="0 0 16 16" fill="none" stroke="#fff" stroke-width="1.200"><path d="M3 5h7v7H3zM10 7.500l2.500-1.500v5L10 9.500M4 2.500c2-1.500 5-1.500 7 0M4 14.500c2 1.500 5 1.500 7 0"/><path d="M6 8.500h1.500"/></svg></button>
    <button aria-label="Updates" class="flex w-6 justify-center"><svg class="size-4" viewBox="0 0 16 16" fill="none" stroke="#fff" stroke-width="1.200"><path d="M8 13.500H1v-10l14-2V7M5 8c.5-3 4-3.500 5.500-1.500V4.500M11 8.500c-.5 2.500-4 3-5.500 1V12"/><circle cx="12.500" cy="12.500" r="3.500" fill="#2b78cc" stroke="none"/></svg></button>
    <button aria-label="Volume" class="flex w-6 justify-center"><svg class="size-[17px]" viewBox="0 0 17 17" fill="none" stroke="#fff" stroke-width="1.200"><path d="M1 6.500h2.500L7 3v11l-3.500-3.500H1zM9 6q1.500 2.500 0 5M11.500 4.500q2.500 4 0 8M14 3q3.500 5.500 0 11"/></svg></button>
    <button aria-label="Wi-Fi" class="flex w-6 justify-center"><svg class="size-[15px]" viewBox="0 0 15 15" fill="none" stroke="#fff" stroke-width="1.200"><path d="M1.500 14C1.500 7 7 2 14 2" stroke="#9a9a9a"/><path d="M5 14c0-5 4-9 9-9M8 14c0-3.500 3-6 6-6M11 14c0-2 1.500-3 3-3"/><circle cx="13" cy="13.500" r="1" fill="#fff" stroke="none"/></svg></button>
    <button class="flex w-16 flex-col items-center text-xs leading-[18px]"><span>4:28 PM</span><span>4/15/2023</span></button>
    <button aria-label="Notifications" class="flex w-12 justify-center"><svg class="mt-1 size-6" viewBox="0 0 24 24"><path d="M0 1h16v13H10l-4 4v-4H0z" fill="#fff"/><path d="M3 4.500h10M3 7.500h10M3 10.500h6" stroke="#1d1c1e" stroke-width="1.200"/><circle cx="16" cy="16" r="7.700" fill="#343436" stroke="#8f8f8f"/><text x="16" y="20" text-anchor="middle" font-size="12" fill="#fff">1</text></svg></button>
    <span class="mr-1 h-10 w-px bg-[#6b6b6b]"></span>
  </div>
</footer>

<!-- Desktop overlays -->
<div class="pointer-events-none absolute right-[57px] bottom-[73px] z-30 w-[236px] text-[#808080]/55">
  <p class="text-[19px] leading-6">Activate Windows</p>
  <p class="text-sm leading-5">Go to Settings to activate Windows.</p>
</div>
<div class="absolute top-[60px] left-[50px] z-40 flex h-[140px] w-[65px] flex-col items-center bg-[#1a1a1a]/97 pt-5">
  <input type="range" aria-label="Brightness" min="0" max="100" value="100" class="h-[79px] w-[11px] appearance-none bg-[#0477d8] [direction:rtl] [writing-mode:vertical-lr] [&::-webkit-slider-thumb]:size-[11px] [&::-webkit-slider-thumb]:appearance-none [&::-webkit-slider-thumb]:bg-white">
  <svg class="mt-[10px] size-4" viewBox="0 0 16 16"><circle cx="8" cy="8" r="3.600" fill="#fff"/><g fill="#fff"><circle cx="8" cy="1.300" r="1"/><circle cx="8" cy="14.700" r="1"/><circle cx="1.300" cy="8" r="1"/><circle cx="14.700" cy="8" r="1"/><circle cx="3.300" cy="3.300" r="1"/><circle cx="12.700" cy="12.700" r="1"/><circle cx="3.300" cy="12.700" r="1"/><circle cx="12.700" cy="3.300" r="1"/></g></svg>
</div>
</body>
</html>
